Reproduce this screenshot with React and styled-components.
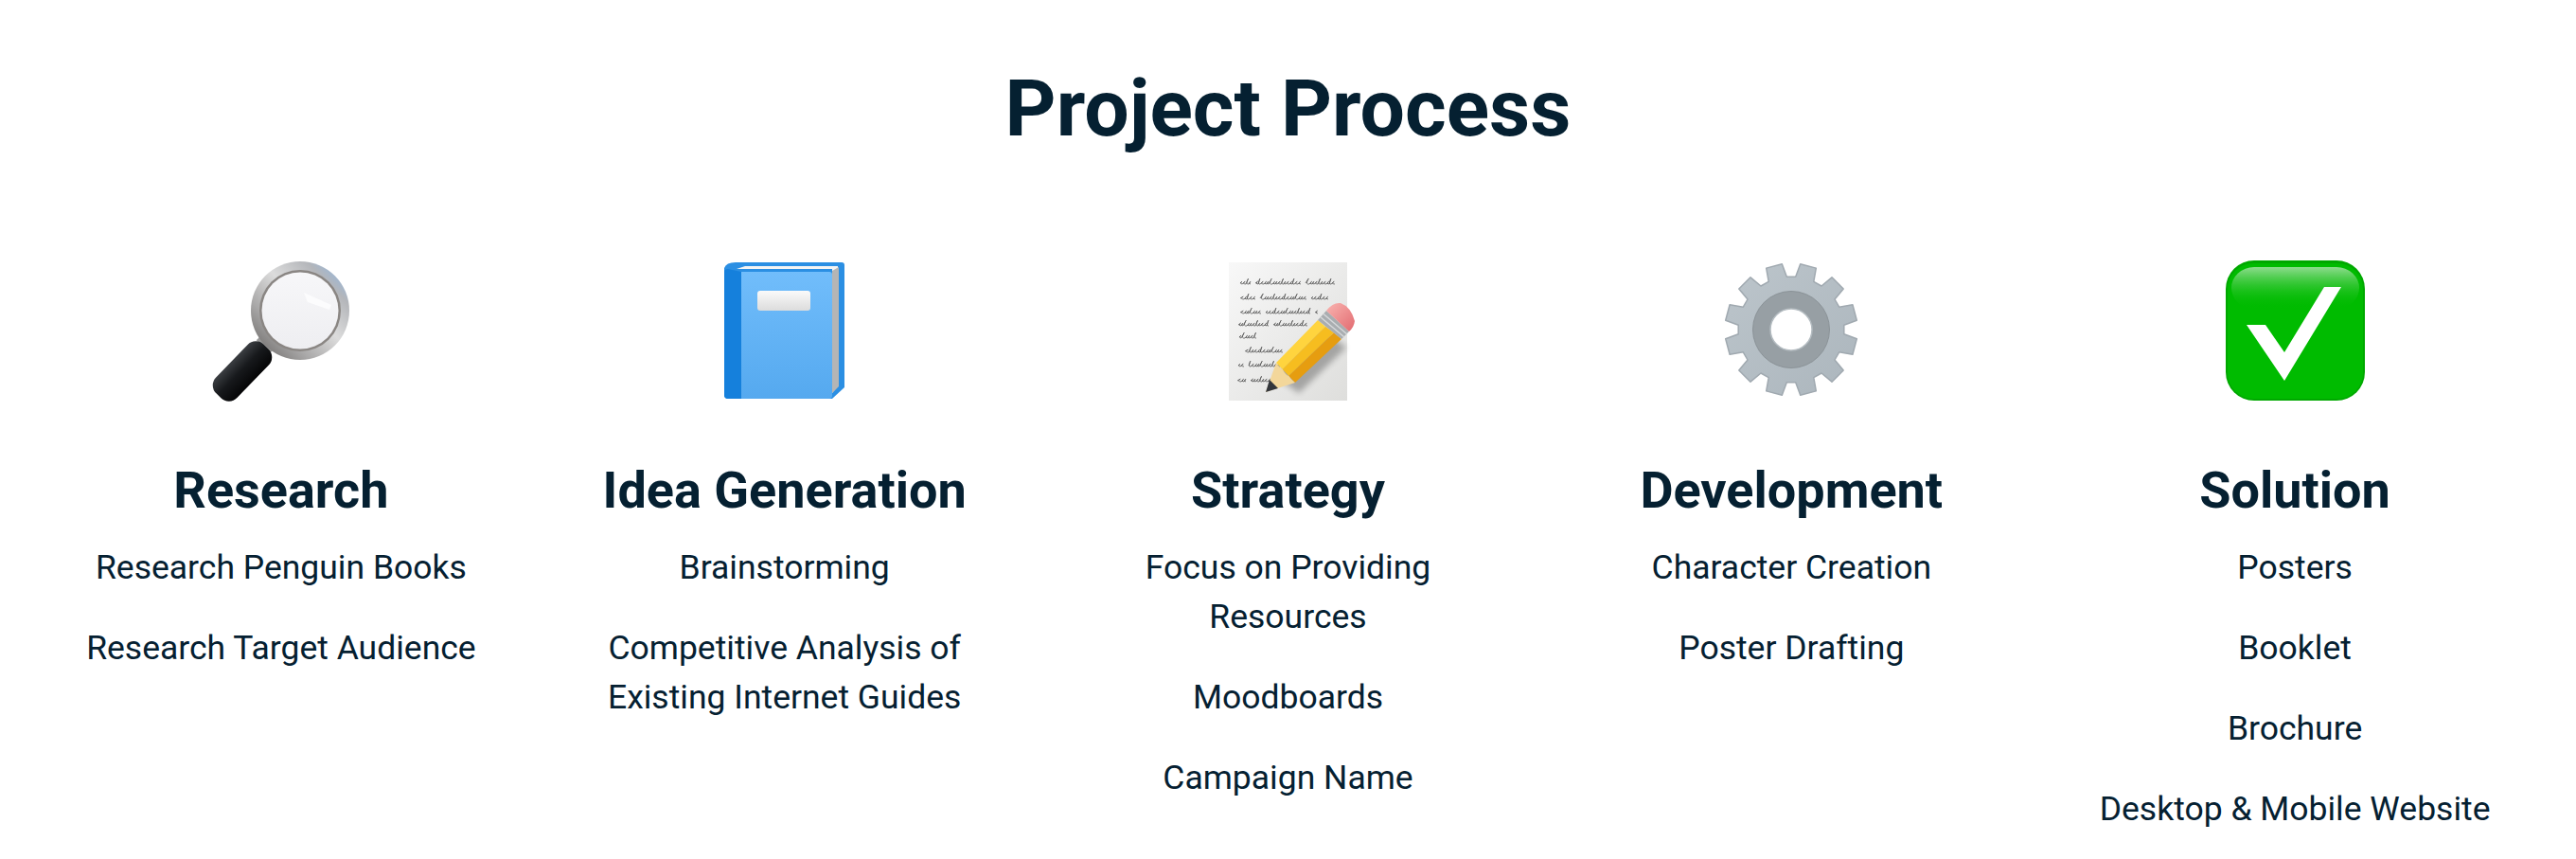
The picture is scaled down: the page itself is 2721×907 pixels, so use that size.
import React from "react";
import styled, { createGlobalStyle } from "styled-components";

const GlobalStyle = createGlobalStyle`
    html, body {
        margin: 0;
        background: #ffffff;
    }
`;

const Page = styled.div`
    padding: 0 31px;
    font-family: Roboto, "Liberation Sans", sans-serif;
    color: #052031;
    text-align: center;
`;

const Title = styled.h1`
    margin: 0;
    padding-top: 66px;
    font-size: 84px;
    line-height: 98px;
    font-weight: 700;
`;

const Steps = styled.div`
    display: grid;
    grid-template-columns: repeat(5, 1fr);
    margin-top: 105px;
`;

const Step = styled.section`
    padding: 0 40px;
`;

const IconBox = styled.svg`
    display: block;
    width: 160px;
    height: 160px;
    margin: 0 auto;
`;

const StepName = styled.h2`
    margin: 57px 0 0;
    font-size: 54px;
    line-height: 64px;
    font-weight: 700;
`;

const ItemList = styled.div`
    margin-top: 23px;
`;

const StepItem = styled.p`
    margin: 0 0 33px;
    font-size: 35.5px;
    line-height: 52px;
    font-weight: 400;
`;

function MagnifierIcon() {
    return (
        <IconBox viewBox="0 0 160 160">
            <defs>
                <linearGradient id="rim" x1="0" y1="1" x2="1" y2="0">
                    <stop offset="0" stopColor="#5f5c5a" />
                    <stop offset="0.3" stopColor="#a9a8a8" />
                    <stop offset="0.55" stopColor="#dcdcdc" />
                    <stop offset="0.78" stopColor="#b4b6ba" />
                    <stop offset="1" stopColor="#84b8f2" />
                </linearGradient>
                <linearGradient id="grip" x1="0" y1="0" x2="0" y2="1">
                    <stop offset="0" stopColor="#3b3e42" />
                    <stop offset="0.45" stopColor="#17191c" />
                    <stop offset="1" stopColor="#050506" />
                </linearGradient>
                <linearGradient id="glass" x1="0" y1="0" x2="0" y2="1">
                    <stop offset="0" stopColor="#f7f7f9" />
                    <stop offset="1" stopColor="#eeeef1" />
                </linearGradient>
            </defs>
            <path d="M58 86 L72 100" stroke="#9a9a9a" strokeWidth="12" />
            <rect x="3" y="107.5" width="72" height="31" rx="12" fill="url(#grip)" transform="rotate(-45.8 39 123)" />
            <circle cx="100" cy="59" r="52" fill="url(#rim)" />
            <circle cx="100" cy="59" r="43" fill="#8a8683" />
            <circle cx="100" cy="59" r="40.5" fill="url(#glass)" />
            <path d="M104 40 L133 53 L131 58 L108 50 Z" fill="#fcfcfd" />
        </IconBox>
    );
}

function BookIcon() {
    return (
        <IconBox viewBox="0 0 160 160">
            <defs>
                <linearGradient id="cover" x1="0" y1="0" x2="0" y2="1">
                    <stop offset="0" stopColor="#71bdfb" />
                    <stop offset="1" stopColor="#55a9ef" />
                </linearGradient>
                <linearGradient id="label" x1="0" y1="0" x2="0" y2="1">
                    <stop offset="0" stopColor="#fafafa" />
                    <stop offset="1" stopColor="#dcdcdc" />
                </linearGradient>
            </defs>
            <path d="M16 14 Q18 8 28 8 H140 Q143 8 143 11 V140 L130 152 H20 Q16 152 16 148 Z" fill="#2b8fe3" />
            <path d="M29 15 L38 12 H136 V139 L130 146 V15 Z" fill="#f4f4f4" />
            <path d="M130 17 L137 13 V139 L130 146 Z" fill="#b5b5b5" />
            <path d="M34 18 H127 Q130 18 130 21 V149 Q130 152 127 152 H34 Z" fill="url(#cover)" />
            <path d="M16 18 Q16 15 20 15 L34 18 V152 H20 Q16 152 16 148 Z" fill="#1580dc" />
            <rect x="51" y="38" width="56" height="21" rx="3" fill="url(#label)" />
        </IconBox>
    );
}

// squiggly lines standing in for the handwriting on the note
const scribbles = [
    [30, 30, 128], [46, 30, 122], [61, 30, 112], [74, 28, 100],
    [87, 29, 46], [102, 30, 74], [117, 28, 72], [133, 27, 60],
];

function scribblePath([y, from, to]) {
    let d = `M${from} ${y}`;
    let x = from;
    let i = Math.round(y);
    while (x < to) {
        const wide = 2 + (i * 5) % 3;
        const tall = (i * 7) % 4 === 0 ? 8 : 3 + (i * 3) % 3;
        if ((i * 13) % 17 === 0) {
            x += 5;
            d += ` M${x} ${y}`;
        } else {
            d += ` Q${x + wide + 1} ${y - tall} ${x + wide * 0.6} ${y - tall * 0.4} T${x + wide} ${y + 1}`;
            x += wide;
        }
        i++;
    }
    return d;
}

function NoteIcon() {
    return (
        <IconBox viewBox="0 0 160 160">
            <defs>
                <linearGradient id="paper" x1="0" y1="0" x2="1" y2="1">
                    <stop offset="0" stopColor="#f8f8f8" />
                    <stop offset="1" stopColor="#dededc" />
                </linearGradient>
                <linearGradient id="rubber" x1="0" y1="0" x2="1" y2="1">
                    <stop offset="0" stopColor="#f9b4b0" />
                    <stop offset="1" stopColor="#e26a70" />
                </linearGradient>
                <filter id="soft">
                    <feGaussianBlur stdDeviation="3" />
                </filter>
            </defs>
            <rect x="18" y="8" width="125" height="146" fill="url(#paper)" />
            {scribbles.map((line) => (
                <path key={line[0]} d={scribblePath(line)} fill="none" stroke="#555555" strokeWidth="0.8" />
            ))}
            <path d="M66 128 L116 78 L142 98 L92 146 Z" fill="#000" opacity="0.28" filter="url(#soft)" />
            <path d="M68 114 L112 69 L120 75.7 L74.7 121 Z" fill="#ffd43e" />
            <path d="M74.7 121 L120 75.7 L129 82.3 L81.3 128 Z" fill="#f6bd1f" />
            <path d="M81.3 128 L129 82.3 L137 89 L88 135 Z" fill="#e69d10" />
            <path d="M68 114 Q72 120 74.7 121 Q78 127 81.3 128 Q85 133 88 135 L57 145 Z" fill="#f3d79b" />
            <path d="M61 132 L70 141 L57 145 Z" fill="#33363b" />
            <path d="M112 69 L121 59 L145 81 L137 89 Z" fill="#a9adb0" />
            <path d="M115 66 L140 87 M118 62.500 L143 84" stroke="#d6d8da" strokeWidth="1.5" />
            <path d="M121 59 Q128 50 136 51 Q147 55 151 70 Q150 77 145 81 Z" fill="url(#rubber)" />
        </IconBox>
    );
}

function gearPath(cx, cy, outer, root, teeth) {
    const step = (Math.PI * 2) / teeth;
    const pts = [];
    for (let i = 0; i < teeth; i++) {
        const a = i * step - Math.PI / 2 + step / 2;
        const at = (r, off) => `${(cx + r * Math.cos(a + off)).toFixed(1)} ${(cy + r * Math.sin(a + off)).toFixed(1)}`;
        pts.push(at(root, -step * 0.34), at(outer, -step * 0.235), at(outer, step * 0.235), at(root, step * 0.34));
    }
    return `M${pts.join(" L")} Z`;
}

function GearIcon() {
    return (
        <IconBox viewBox="0 0 160 160">
            <defs>
                <linearGradient id="steel" x1="0" y1="0" x2="1" y2="1">
                    <stop offset="0" stopColor="#bcc5cb" />
                    <stop offset="1" stopColor="#acb6bd" />
                </linearGradient>
            </defs>
            <path d={gearPath(80, 79, 70, 56, 12)} fill="url(#steel)" stroke="#a0a9b0" strokeWidth="1.5" strokeLinejoin="round" />
            <circle cx="80" cy="79" r="40.5" fill="#979fa4" stroke="#8b9398" strokeWidth="1" />
            <circle cx="80" cy="79" r="22" fill="#ffffff" stroke="#b4bcc1" strokeWidth="1.5" />
        </IconBox>
    );
}

function CheckIcon() {
    return (
        <IconBox viewBox="0 0 160 160">
            <defs>
                <linearGradient id="gloss" x1="0" y1="0" x2="0" y2="1">
                    <stop offset="0" stopColor="#8fdc8f" />
                    <stop offset="1" stopColor="#00bb00" stopOpacity="0" />
                </linearGradient>
            </defs>
            <rect x="7" y="6" width="147" height="148" rx="30" fill="#00a800" />
            <rect x="9" y="9" width="143" height="143" rx="27" fill="#00bb00" />
            <rect x="13" y="13" width="135" height="44" rx="24" fill="url(#gloss)" />
            <path d="M29 74 H49 L69 103 L111 34 H129 L69 133 Z" fill="#ffffff" />
        </IconBox>
    );
}

const steps = [
    { name: "Research", Icon: MagnifierIcon, items: ["Research Penguin Books", "Research Target Audience"] },
    { name: "Idea Generation", Icon: BookIcon, items: ["Brainstorming", "Competitive Analysis of Existing Internet Guides"] },
    { name: "Strategy", Icon: NoteIcon, items: ["Focus on Providing Resources", "Moodboards", "Campaign Name"] },
    { name: "Development", Icon: GearIcon, items: ["Character Creation", "Poster Drafting"] },
    { name: "Solution", Icon: CheckIcon, items: ["Posters", "Booklet", "Brochure", "Desktop & Mobile Website"] },
];

function App() {
    return (
        <Page>
            <GlobalStyle />
            <Title>Project Process</Title>
            <Steps>
                {steps.map(({ name, Icon, items }) => (
                    <Step key={name}>
                        <Icon />
                        <StepName>{name}</StepName>
                        <ItemList>
                            {items.map((item) => (
                                <StepItem key={item}>{item}</StepItem>
                            ))}
                        </ItemList>
                    </Step>
                ))}
            </Steps>
        </Page>
    );
}

export default App;
